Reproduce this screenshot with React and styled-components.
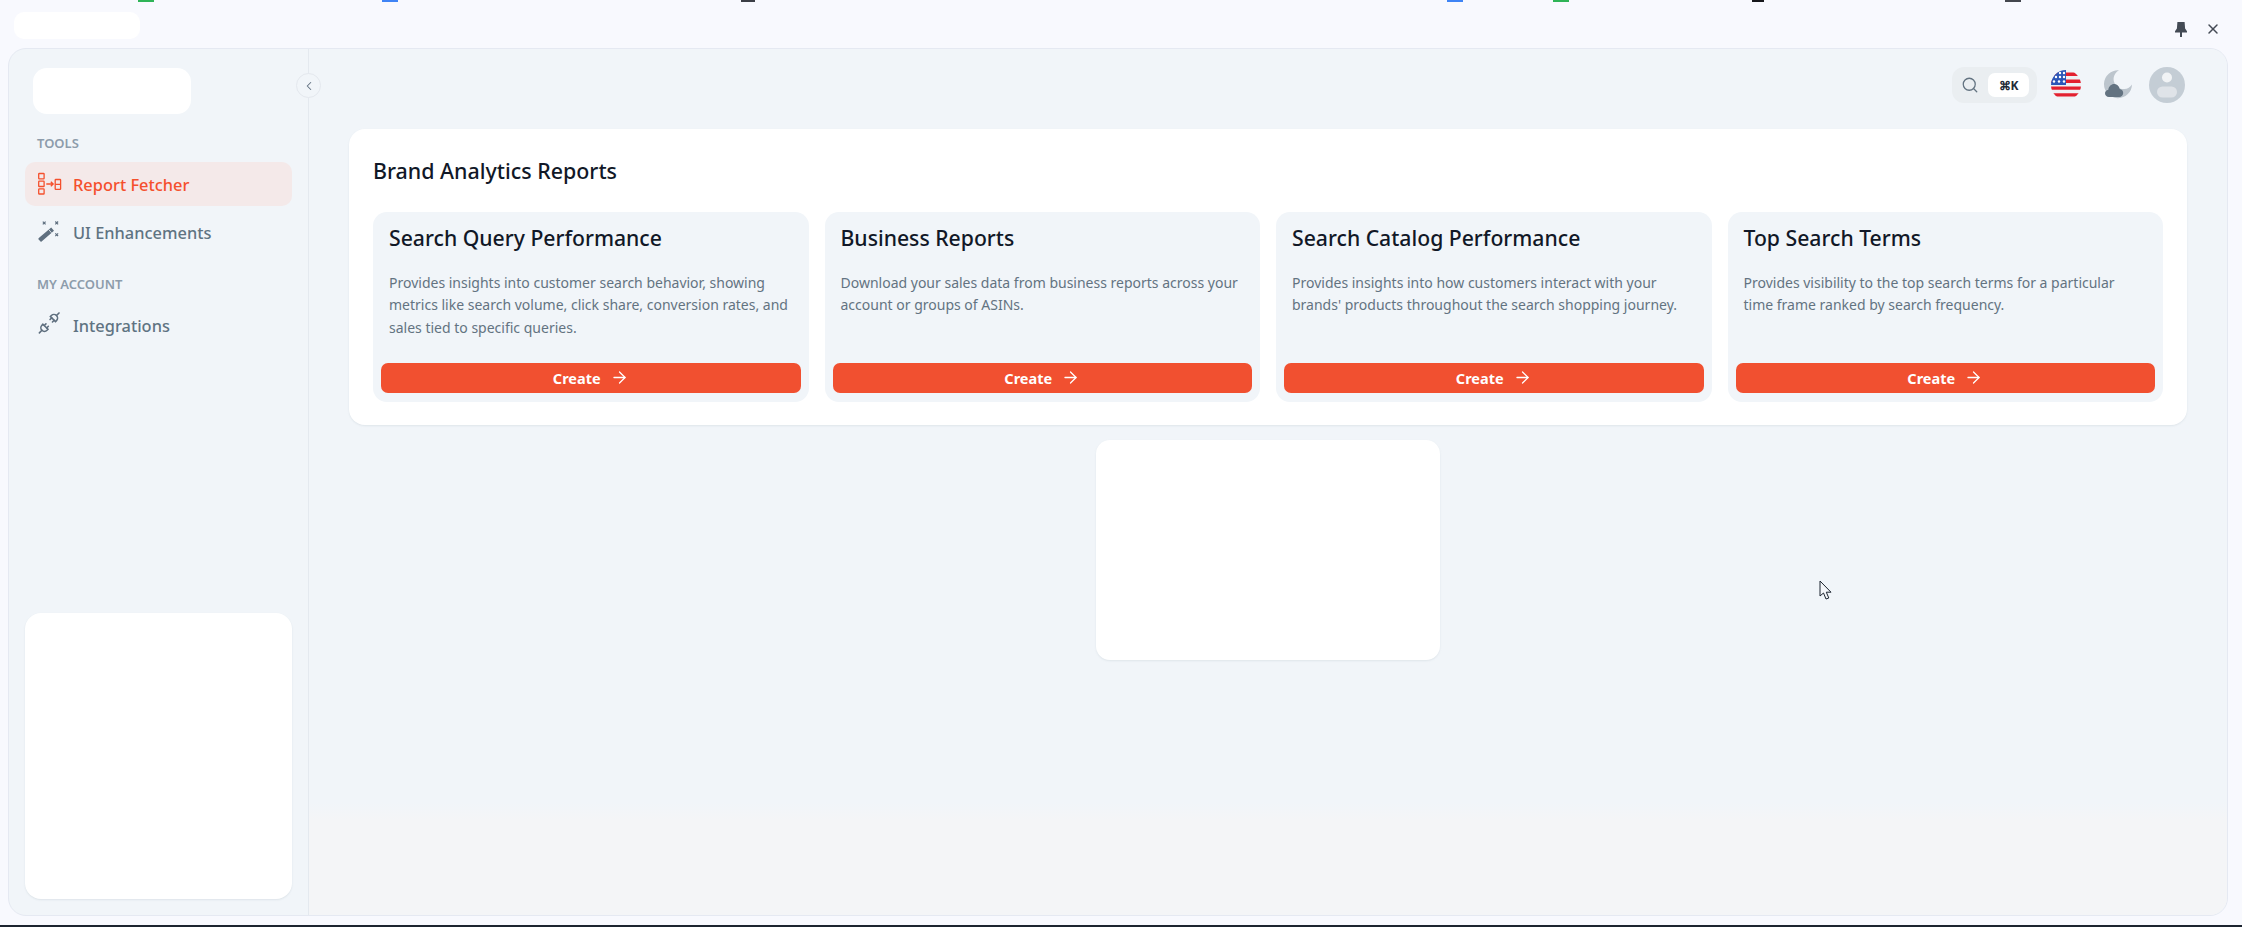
import React from 'react';
import styled, { createGlobalStyle } from 'styled-components';
import { ArrowRight, ChevronLeft, Search, X } from 'lucide-react';

const GlobalStyle = createGlobalStyle`
    * { box-sizing: border-box; }
    html, body { margin: 0; padding: 0; }
    body {
        font-family: "Noto Sans", "Open Sans", sans-serif;
        background-color: #f8f9fe;
        color: #111827;
        overflow: hidden;
    }
`;

const Page = styled.div`
    position: relative;
    display: flex;
    flex-direction: column;
    width: 2242px;
    height: 927px;
    background-color: #f8f9fe;
`;

const TabStrip = styled.div`
    display: flex;
    height: 2px;
    flex-shrink: 0;
`;

const TabMark = styled.span`
    width: ${(p) => p.$width}px;
    margin-left: ${(p) => p.$left}px;
    background-color: ${(p) => p.$color};
`;

const WindowBar = styled.div`
    display: flex;
    align-items: flex-start;
    justify-content: space-between;
    height: 46px;
    flex-shrink: 0;
    padding: 10px 21px 0 14px;
`;

const WindowPill = styled.div`
    width: 126px;
    height: 27px;
    border-radius: 10px;
    background-color: #ffffff;
`;

const WindowControls = styled.div`
    display: flex;
    align-items: center;
    gap: 18px;
    padding-top: 9px;
    color: #444b55;
`;

const Frame = styled.div`
    display: flex;
    flex: 1;
    min-height: 0;
    margin: 0 14px 0 8px;
    border: 1px solid #e5e9f2;
    border-radius: 18px;
    overflow: hidden;
    background-color: #f1f5f9;
`;

const BottomBar = styled.div`
    height: 11px;
    flex-shrink: 0;
    border-bottom: 2px solid #1c2430;
`;

const Sidebar = styled.aside`
    position: relative;
    display: flex;
    flex-direction: column;
    width: 300px;
    flex-shrink: 0;
    padding: 19px 16px 16px;
    border-right: 1px solid #e4e9ef;
`;

const LogoBlock = styled.div`
    width: 158px;
    height: 46px;
    margin-left: 8px;
    border-radius: 14px;
    background-color: #ffffff;
`;

const SectionLabel = styled.div`
    margin: ${(p) => p.$top}px 0 0 12px;
    height: 18px;
    line-height: 18px;
    font-size: 13px;
    font-weight: 600;
    color: #8d9cab;
`;

const NavList = styled.nav`
    display: flex;
    flex-direction: column;
    gap: 4px;
    margin-top: ${(p) => p.$top}px;
`;

const NavItem = styled.a`
    display: flex;
    align-items: center;
    gap: 12px;
    height: 44px;
    padding-left: 12px;
    border-radius: 10px;
    font-size: 16.4px;
    font-weight: 500;
    color: ${(p) => (p.$active ? '#f4502d' : '#5f7382')};
    background-color: ${(p) => (p.$active ? '#f4e9e9' : 'transparent')};
`;

const NavIcon = styled.svg`
    width: 24px;
    height: 24px;
    flex-shrink: 0;
    overflow: visible;
`;

const SideCard = styled.div`
    width: 267px;
    height: 286px;
    margin-top: auto;
    border-radius: 16px;
    background-color: #ffffff;
    box-shadow: 0 1px 2px rgba(145, 158, 171, 0.2);
`;

const CollapseButton = styled.button`
    position: absolute;
    top: 24px;
    right: -13px;
    z-index: 2;
    display: flex;
    align-items: center;
    justify-content: center;
    width: 25px;
    height: 25px;
    padding: 0;
    border: 1px solid #e4e8ee;
    border-radius: 50%;
    background-color: #f1f5f9;
    color: #5f6f7f;
`;

const Main = styled.main`
    display: flex;
    flex-direction: column;
    flex: 1;
    min-width: 0;
    padding: 18px 40px 0;
    background: linear-gradient(#f1f5f9 0, #f1f5f9 87%, #f4f5f7 89%);
`;

const Header = styled.header`
    display: flex;
    align-items: center;
    justify-content: flex-end;
    height: 36px;
    padding-right: 2px;
`;

const SearchBox = styled.div`
    display: flex;
    align-items: center;
    justify-content: space-between;
    width: 85px;
    height: 36px;
    padding: 0 8px 0 9px;
    border-radius: 12px;
    background-color: #eaeef1;
    color: #637381;
`;

const Shortcut = styled.span`
    display: flex;
    align-items: center;
    justify-content: center;
    width: 41px;
    height: 24px;
    border-radius: 7px;
    background-color: #ffffff;
    font-size: 12px;
    font-weight: 700;
    color: #1f2a37;
`;

const FlagIcon = styled.svg`
    width: 30px;
    height: 30px;
    margin-left: 14px;
`;

const MoonIcon = styled.svg`
    width: 30px;
    height: 30px;
    margin-left: 22px;
`;

const AvatarIcon = styled.svg`
    width: 36px;
    height: 36px;
    margin-left: 16px;
`;

const ReportsPanel = styled.section`
    display: flex;
    flex-direction: column;
    height: 296px;
    margin-top: 26px;
    padding: 24px;
    border-radius: 16px;
    background-color: #ffffff;
    box-shadow: 0 1px 2px rgba(145, 158, 171, 0.18);
`;

const PanelTitle = styled.h2`
    margin: 0;
    height: 35px;
    line-height: 36px;
    font-size: 21.4px;
    font-weight: 500;
    color: #111827;
`;

const CardGrid = styled.div`
    display: grid;
    grid-template-columns: repeat(4, 1fr);
    gap: 16px;
    margin-top: 24px;
`;

const ReportCard = styled.article`
    display: flex;
    flex-direction: column;
    height: 190px;
    padding: 8px 8px 9px;
    border-radius: 14px;
    background-color: #f1f5f9;
`;

const CardTitle = styled.h3`
    margin: 2px 0 0 8px;
    height: 32px;
    line-height: 32px;
    font-size: 21.2px;
    font-weight: 500;
    color: #111827;
`;

const CardText = styled.p`
    margin: 18px 8px 0;
    font-size: 14px;
    line-height: 22.4px;
    color: #637381;
`;

const CreateButton = styled.button`
    display: flex;
    align-items: center;
    justify-content: center;
    gap: 9px;
    width: 100%;
    height: 30px;
    margin-top: auto;
    padding: 0 0 1px;
    border: 0;
    border-radius: 7px;
    background-color: #f15030;
    color: #ffffff;
    font-family: inherit;
    font-size: 14.5px;
    font-weight: 700;
`;

const PlaceholderCard = styled.div`
    align-self: center;
    width: 344px;
    height: 220px;
    margin-top: 15px;
    border-radius: 14px;
    background-color: #ffffff;
    box-shadow: 0 1px 2px rgba(145, 158, 171, 0.18);
`;

const Cursor = styled.svg`
    position: absolute;
    left: 1819px;
    top: 580px;
    width: 14px;
    height: 21px;
`;

const tabMarks = [
    { left: 138, width: 16, color: '#2fb457' },
    { left: 228, width: 16, color: '#3f84f5' },
    { left: 343, width: 14, color: '#3c3f46' },
    { left: 692, width: 16, color: '#3f84f5' },
    { left: 90, width: 16, color: '#2fb457' },
    { left: 183, width: 12, color: '#17181c' },
    { left: 241, width: 16, color: '#44474e' },
];

const reports = [
    {
        title: 'Search Query Performance',
        text: 'Provides insights into customer search behavior, showing metrics like search volume, click share, conversion rates, and sales tied to specific queries.',
    },
    {
        title: 'Business Reports',
        text: 'Download your sales data from business reports across your account or groups of ASINs.',
    },
    {
        title: 'Search Catalog Performance',
        text: "Provides insights into how customers interact with your brands' products throughout the search shopping journey.",
    },
    {
        title: 'Top Search Terms',
        text: 'Provides visibility to the top search terms for a particular time frame ranked by search frequency.',
    },
];

const FetcherIcon = () => (
    <NavIcon viewBox="0 0 24 24" fill="none" stroke="#f4502d" strokeWidth="1.3">
        <rect x="1.7" y="1.5" width="5.4" height="5.3" rx="0.6" />
        <rect x="1.7" y="9.2" width="5.4" height="5.3" rx="0.6" />
        <rect x="1.7" y="16.8" width="5.4" height="5.2" rx="0.6" />
        <path d="M9.3 12h6.8M13.8 9.8l2.4 2.2-2.4 2.2" />
        <rect x="18.2" y="7.5" width="5.4" height="9.8" rx="0.6" />
        <path d="M18.2 12.3h5.4" />
    </NavIcon>
);

const WandIcon = () => (
    <NavIcon viewBox="0 0 24 24" fill="none" stroke="#5f6f7f" strokeWidth="1.2">
        <path d="M1.5 18.2 14.2 7.5 17 10.8 4.6 21.6a.8.8 0 0 1-1.1-.1L1.4 19.3Z" fill="#5f6f7f" stroke="none" />
        <path d="M11.8 9.6l2.8 3.3" stroke="#f1f5f9" strokeWidth="0.8" />
        <path d="m5.8 1.6 2.8 2.8M8.6 1.6 5.8 4.4M18.3 1.5l2.8 2.8M21.1 1.5l-2.8 2.8M18.3 13.4l2.8 2.8M21.1 13.4l-2.8 2.8" />
    </NavIcon>
);

// two plugs facing each other, the same shape turned round
const PlugHalf = ({ x, y, angle }) => (
    <g transform={`translate(${x} ${y}) rotate(${angle})`}>
        <path d="M-3.6-1.2H3.6V.2a3.6 3.6 0 0 1-7.2 0Z" />
        <path d="M-1.7-1.2V-3.6M1.7-1.2V-3.6M0 3.8V7.4" />
    </g>
);

const PlugIcon = () => (
    <NavIcon viewBox="0 0 24 24" fill="none" stroke="#5f6f7f" strokeWidth="1.6" strokeLinecap="round">
        <PlugHalf x={7.6} y={14.6} angle={45} />
        <PlugHalf x={16.8} y={5.2} angle={225} />
    </NavIcon>
);

const PinIcon = () => (
    <svg width="12" height="15" viewBox="0 0 12 15" fill="#444b55">
        <path d="M2.4 0h7.2l.5 6.4L12 9.3v1.3H7V15H5v-4.4H0V9.3l1.9-2.9Z" />
    </svg>
);

const Flag = () => (
    <FlagIcon viewBox="0 0 30 30">
        <defs>
            <clipPath id="flag-circle">
                <circle cx="15" cy="15" r="15" />
            </clipPath>
        </defs>
        <g clipPath="url(#flag-circle)">
            <rect width="30" height="30" fill="#eef0f3" />
            <path d="M0 2.5h30v3.4H0zM0 9.5h30v3.4H0zM0 16.4h30v3.4H0zM0 23.2h30v3.4H0z" fill="#e3202f" />
            <rect width="15" height="15" fill="#2c57b8" />
            <g fill="#ffffff">
                <circle cx="9" cy="3" r="1.2" />
                <circle cx="13" cy="3" r="1.2" />
                <circle cx="5" cy="7" r="1.2" />
                <circle cx="9" cy="7" r="1.2" />
                <circle cx="13" cy="7" r="1.2" />
                <circle cx="3" cy="11.5" r="1.2" />
                <circle cx="8" cy="11.5" r="1.2" />
                <circle cx="13" cy="11.5" r="1.2" />
            </g>
        </g>
    </FlagIcon>
);

const MoonCloud = () => (
    <MoonIcon viewBox="0 0 30 30">
        <path d="M16 .2A14 14 0 1 0 29 14.5 10 10 0 1 1 16 .2Z" fill="#bcc5cd" />
        <path d="M6 27C3.5 27 2 25.3 2 23.3c0-1.9 1.4-3.4 3.3-3.6C5.8 16.3 8.3 14 11 14c3 0 5.3 2.2 5.7 5 2 .3 3.5 2 3.5 4 0 2.2-1.7 4-4 4Z" fill="#637381" />
    </MoonIcon>
);

const Avatar = () => (
    <AvatarIcon viewBox="0 0 36 36">
        <circle cx="18" cy="18" r="18" fill="#c4cdd5" />
        <circle cx="18" cy="10.5" r="5" fill="#f1f3f5" />
        <rect x="8" y="19.5" width="20" height="11" rx="5.5" fill="#dfe3e8" />
    </AvatarIcon>
);

const App = () => {
    return (
        <Page>
            <GlobalStyle />
            <TabStrip>
                {tabMarks.map((mark) => (
                    <TabMark key={mark.left + mark.color} $left={mark.left} $width={mark.width} $color={mark.color} />
                ))}
            </TabStrip>
            <WindowBar>
                <WindowPill />
                <WindowControls>
                    <PinIcon />
                    <X size={16} strokeWidth={2.2} />
                </WindowControls>
            </WindowBar>
            <Frame>
                <Sidebar>
                    <LogoBlock />
                    <CollapseButton>
                        <ChevronLeft size={14} strokeWidth={1.8} />
                    </CollapseButton>
                    <SectionLabel $top={20}>TOOLS</SectionLabel>
                    <NavList $top={10}>
                        <NavItem $active><FetcherIcon />Report Fetcher</NavItem>
                        <NavItem><WandIcon />UI Enhancements</NavItem>
                    </NavList>
                    <SectionLabel $top={21}>MY ACCOUNT</SectionLabel>
                    <NavList $top={10}>
                        <NavItem><PlugIcon />Integrations</NavItem>
                    </NavList>
                    <SideCard />
                </Sidebar>
                <Main>
                    <Header>
                        <SearchBox>
                            <Search size={18} strokeWidth={1.7} />
                            <Shortcut>⌘K</Shortcut>
                        </SearchBox>
                        <Flag />
                        <MoonCloud />
                        <Avatar />
                    </Header>
                    <ReportsPanel>
                        <PanelTitle>Brand Analytics Reports</PanelTitle>
                        <CardGrid>
                            {reports.map((report) => (
                                <ReportCard key={report.title}>
                                    <CardTitle>{report.title}</CardTitle>
                                    <CardText>{report.text}</CardText>
                                    <CreateButton>
                                        Create
                                        <ArrowRight size={19} strokeWidth={1.6} />
                                    </CreateButton>
                                </ReportCard>
                            ))}
                        </CardGrid>
                    </ReportsPanel>
                    <PlaceholderCard />
                </Main>
            </Frame>
            <BottomBar />
            <Cursor viewBox="0 0 14 21" fill="#f4f6f9" stroke="#1c2430" strokeWidth="1">
                <path d="M1 1v15l3.5-3 2.5 6 2.8-1-2.5-5.8H12Z" />
            </Cursor>
        </Page>
    );
};

export default App;
